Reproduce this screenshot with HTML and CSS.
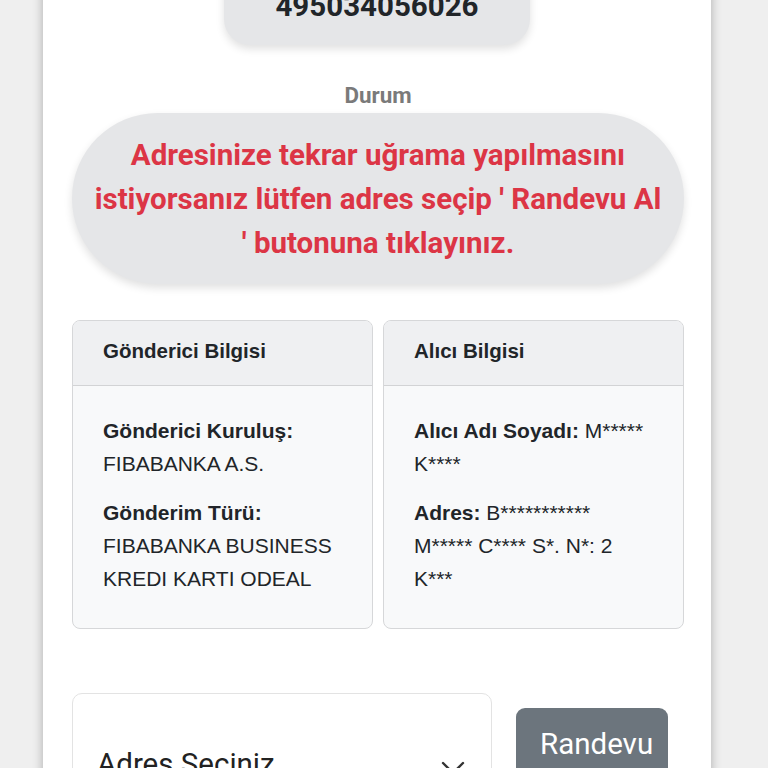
FILE: index.html
```html
<!DOCTYPE html>
<html lang="tr">
<head>
<meta charset="utf-8">
<link rel="stylesheet" href="styles.css">
</head>
<body>
<div class="sheet">
  <div class="track">495034056026</div>
  <div class="label">Durum</div>
  <div class="status">Adresinize tekrar uğrama yapılmasını istiyorsanız lütfen adres seçip ' Randevu Al ' butonuna tıklayınız.</div>
  <div class="cards">
    <div class="card">
      <div class="card-head">Gönderici Bilgisi</div>
      <div class="card-body">
        <p><b>Gönderici Kuruluş:</b><br>FIBABANKA A.S.</p>
        <p><b>Gönderim Türü:</b><br>FIBABANKA BUSINESS KREDI KARTI ODEAL</p>
      </div>
    </div>
    <div class="card">
      <div class="card-head">Alıcı Bilgisi</div>
      <div class="card-body">
        <p><b>Alıcı Adı Soyadı:</b> M***** K****</p>
        <p><b>Adres:</b> B*********** M***** C**** S*. N*: 2 K***</p>
      </div>
    </div>
  </div>
  <div class="actions">
    <div class="select">
      <span>Adres Seçiniz</span>
      <svg class="chev" width="24" height="14" viewBox="0 0 24 14"><path d="M2 2l10 10 10-10" fill="none" stroke="#333" stroke-width="2.4" stroke-linecap="round" stroke-linejoin="round"/></svg>
    </div>
    <div class="btn">Randevu Al</div>
  </div>
</div>
</body>
</html>
```
FILE: styles.css
```css
html, body {
  margin: 0;
  padding: 0;
  background: #efefef;
  height: 768px;
  overflow: hidden;
}
.sheet {
  width: 612px;
  margin: -33px 0 0 43px;
  padding: 0 27px 40px 29px;
  background: #fff;
  box-shadow: 0 0 10px rgba(0,0,0,0.28);
  display: flex;
  flex-direction: column;
  align-items: center;
  font-family: Roboto, "Noto Sans", sans-serif;
}
.track {
  width: 306px;
  height: 78px;
  line-height: 78px;
  text-align: center;
  background: #e5e6e8;
  border-radius: 26px;
  box-shadow: 0 4px 8px rgba(0,0,0,0.12);
  font-weight: 700;
  font-size: 29.5px;
  color: #212529;
  margin-left: -2px;
}
.label {
  margin-top: 36px;
  font-size: 22.4px;
  font-weight: 700;
  color: #7a7a7a;
  line-height: 28px;
}
.status {
  margin-top: 4px;
  align-self: stretch;
  background: #e5e6e8;
  border-radius: 86px;
  box-shadow: 0 4px 8px rgba(0,0,0,0.12);
  padding: 20px 18px 19px;
  text-align: center;
  color: #dc3545;
  font-size: 29.5px;
  font-weight: 700;
  line-height: 44px;
}
.cards {
  margin-top: 36px;
  align-self: stretch;
  display: grid;
  grid-template-columns: 1fr 1fr;
  gap: 10px;
  font-family: "Liberation Sans", Arial, sans-serif;
  color: #212529;
}
.card {
  border: 1px solid #d6d7d9;
  border-radius: 8px;
  background: #f8f9fa;
  overflow: hidden;
}
.card-head {
  height: 64px;
  line-height: 60px;
  padding: 0 30px;
  background: #eff0f2;
  border-bottom: 1px solid #d2d3d5;
  font-weight: 700;
  font-size: 20.5px;
}
.card-body {
  padding: 28px 30px 17px;
  font-size: 21px;
  line-height: 33px;
}
.card-body p {
  margin: 0 0 16px;
}
.actions {
  margin-top: 64px;
  align-self: stretch;
  display: flex;
  align-items: flex-start;
  gap: 24px;
}
.select {
  width: 420px;
  height: 120px;
  box-sizing: border-box;
  border: 1px solid #e3e3e3;
  border-radius: 10px;
  display: flex;
  align-items: center;
  justify-content: space-between;
  padding: 22px 26px 0 24px;
  font-size: 29.5px;
  color: #222;
}
.chev {
  margin-top: 8px;
}
.btn {
  margin-top: 15px;
  width: 152px;
  box-sizing: border-box;
  padding: 16px 10px 15px 24px;
  background: #6c757d;
  color: #fff;
  border-radius: 9px;
  font-size: 29.5px;
  line-height: 40px;
}
```
